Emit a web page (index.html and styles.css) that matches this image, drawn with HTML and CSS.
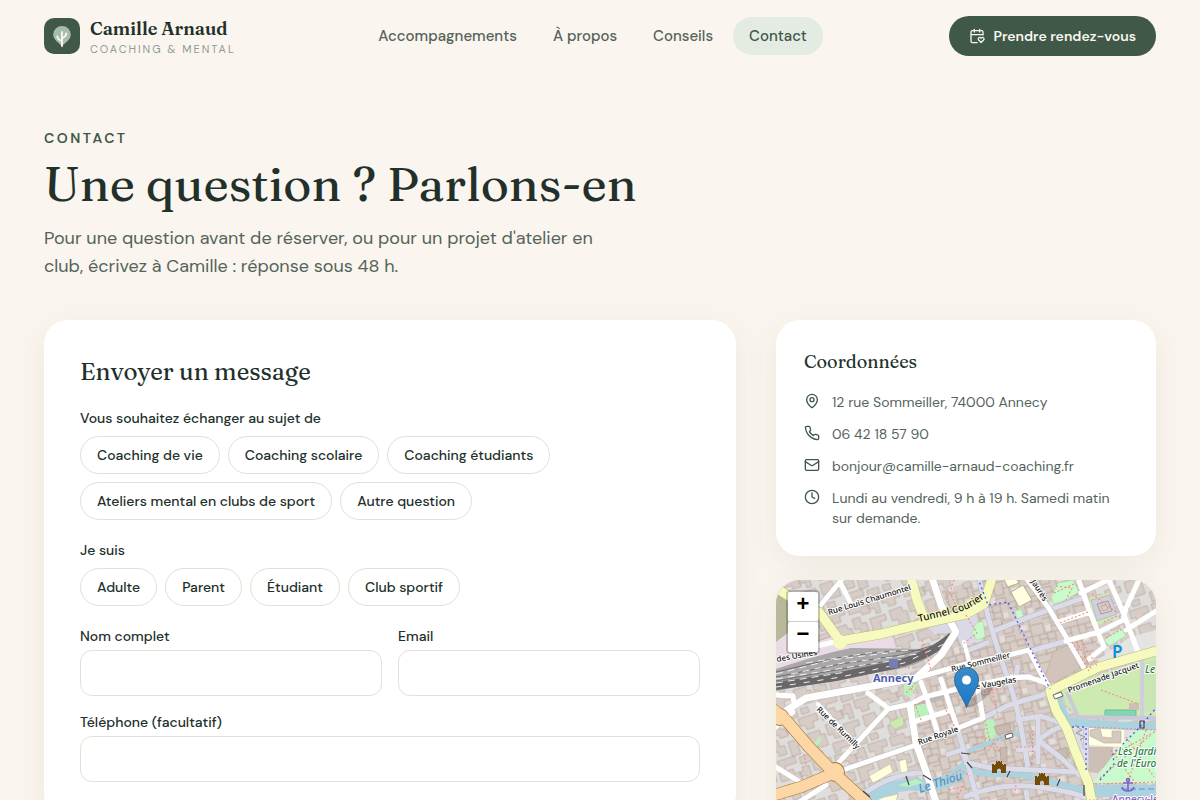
FILE: index.html
```html
<!DOCTYPE html>
<html lang="fr">
<head>
<meta charset="utf-8">
<meta name="viewport" content="width=device-width, initial-scale=1">
<title>Contact – Camille Arnaud</title>
<link rel="stylesheet" href="styles.css">
</head>
<body>
<header class="site-header">
  <a class="brand" href="#">
    <svg class="brand-mark" viewBox="0 0 36 36" aria-hidden="true">
      <rect width="36" height="36" rx="10" fill="#3f5848"/>
      <path d="M18 28C14.500 24.500 9.200 21.500 9.200 16.400A8.800 8.300 0 0 1 26.800 16.400C26.800 21.500 21.500 24.500 18 28Z" fill="#a5bda9"/>
      <path d="M18 28V14M18 23Q13.500 21.500 13.300 18.500M18 20.500Q22 18.500 22.300 15.500" fill="none" stroke="#faf5ee" stroke-width="1.900" stroke-linecap="round"/>
    </svg>
    <span class="brand-text"><span class="brand-name">Camille Arnaud</span><span class="brand-tag">COACHING &amp; MENTAL</span></span>
  </a>
  <nav class="main-nav">
    <a href="#">Accompagnements</a>
    <a href="#">À propos</a>
    <a href="#">Conseils</a>
    <a class="current" href="#" aria-current="page">Contact</a>
  </nav>
  <button class="book" type="button">
    <svg class="icon" viewBox="0 0 24 24" aria-hidden="true"><path d="M8 2v4M16 2v4M3 10h18M12.200 22H5a2 2 0 0 1-2-2V6a2 2 0 0 1 2-2h14a2 2 0 0 1 2 2v4.500"/><path d="M14.600 18a2.250 2.250 0 0 1 0-3.200 2.200 2.200 0 0 1 3.100 0l.5.500.5-.5a2.200 2.200 0 0 1 3.200 0 2.250 2.250 0 0 1 0 3.200L18.200 21.700Z"/></svg>
    Prendre rendez-vous
  </button>
</header>

<main class="page">
  <div class="intro">
    <p class="eyebrow">CONTACT</p>
    <h1>Une question ? Parlons-en</h1>
    <p class="lead">Pour une question avant de réserver, ou pour un projet d'atelier en club, écrivez à Camille : réponse sous 48 h.</p>
  </div>
  <div class="columns">
    <form class="card message">
      <h2>Envoyer un message</h2>
      <fieldset class="group">
        <legend>Vous souhaitez échanger au sujet de</legend>
        <div class="chips">
          <button type="button">Coaching de vie</button>
          <button type="button">Coaching scolaire</button>
          <button type="button">Coaching étudiants</button>
          <button type="button">Ateliers mental en clubs de sport</button>
          <button type="button">Autre question</button>
        </div>
      </fieldset>
      <fieldset class="group">
        <legend>Je suis</legend>
        <div class="chips">
          <button type="button">Adulte</button>
          <button type="button">Parent</button>
          <button type="button">Étudiant</button>
          <button type="button">Club sportif</button>
        </div>
      </fieldset>
      <div class="pair">
        <div class="field"><label for="name">Nom complet</label><input id="name" type="text"></div>
        <div class="field"><label for="email">Email</label><input id="email" type="email"></div>
      </div>
      <div class="field"><label for="phone">Téléphone (facultatif)</label><input id="phone" type="tel"></div>
    </form>

    <aside class="side">
      <section class="card details">
        <h2>Coordonnées</h2>
        <ul>
          <li><svg class="icon" viewBox="0 0 24 24" aria-hidden="true"><path d="M20 10c0 5-5.500 10.200-7.400 11.800a1 1 0 0 1-1.200 0C9.500 20.200 4 15 4 10a8 8 0 0 1 16 0"/><circle cx="12" cy="10" r="3"/></svg><span>12 rue Sommeiller, 74000 Annecy</span></li>
          <li><svg class="icon" viewBox="0 0 24 24" aria-hidden="true"><path d="M22 16.920v3a2 2 0 0 1-2.180 2 19.800 19.800 0 0 1-8.630-3.070 19.500 19.500 0 0 1-6-6A19.800 19.800 0 0 1 2.120 4.180 2 2 0 0 1 4.110 2h3a2 2 0 0 1 2 1.720c.13.960.36 1.900.7 2.810a2 2 0 0 1-.45 2.110L8.090 9.910a16 16 0 0 0 6 6l1.270-1.270a2 2 0 0 1 2.110-.45c.91.340 1.850.57 2.810.7A2 2 0 0 1 22 16.920z"/></svg><span>06 42 18 57 90</span></li>
          <li><svg class="icon" viewBox="0 0 24 24" aria-hidden="true"><rect x="2" y="4" width="20" height="16" rx="2"/><path d="m22 7-9 5.700a2 2 0 0 1-2 0L2 7"/></svg><span>bonjour@camille-arnaud-coaching.fr</span></li>
          <li><svg class="icon" viewBox="0 0 24 24" aria-hidden="true"><circle cx="12" cy="12" r="10"/><path d="M12 6v6l4 2"/></svg><span>Lundi au vendredi, 9 h à 19 h. Samedi matin sur demande.</span></li>
        </ul>
      </section>

      <section class="map" aria-label="Plan d'accès">
        <svg class="tiles" viewBox="0 0 380 280" preserveAspectRatio="xMidYMin slice" aria-hidden="true">
          <defs>
            <pattern id="blocks" width="58" height="46" patternUnits="userSpaceOnUse" patternTransform="rotate(-18)">
              <rect width="58" height="46" fill="#dfdedd"/>
              <path d="M1 1h15v5h6v8h-9v-4H1zM25 2h7v15h-5v-6h-6V6h4zM36 1h19v7h-6v6h-8V9h-5zM2 15h8v7h5v9H7v-5H2zM19 20h16v6h-7v9h-9zM40 18h13v5h4v12H46v-6h-6zM3 35h18v7H9v3H3zM25 38h12v7H25zM41 38h8v6h-8z" fill="#d7cdc6" stroke="#b5a69c" stroke-width=".7"/>
            </pattern>
            <pattern id="dense" width="47" height="39" patternUnits="userSpaceOnUse" patternTransform="rotate(-14)">
              <rect width="47" height="39" fill="#d8cdc6"/>
              <path d="M0 0h47v39H0zM7 0v9H0M7 5h8v8h-5v9M15 0v7h8v-7M23 7v10h9M31 0v6h8v9h8M39 6V0M10 13h11v7H10M21 17v13h9V19M0 20h10M0 28h13v11M13 24h8M30 24h12v-9M36 24v9h11M20 39v-6h10v6" fill="none" stroke="#b1a196" stroke-width=".8"/>
              <path d="M24 9h5v5h-5zM2 11h5v6H2zM38 26h6v5h-6zM15 31h5v6h-5z" fill="#e2dfdc"/>
            </pattern>
            <linearGradient id="pin" x1="0" y1="0" x2="0" y2="1"><stop offset="0" stop-color="#3a8bc8"/><stop offset="1" stop-color="#1b78c8"/></linearGradient>
            <path id="tunnel" d="M143 42 180 33Q198 28 213 14L225 2"/>
          </defs>
          <rect width="380" height="280" fill="url(#blocks)"/>
          <path d="M165 10 203 0H300L310 17 325 50 310 90 273 108 315 220V280H160L140 160 134 125 165 80 181 52Z" fill="url(#dense)"/>
          <!-- green and open areas -->
          <path d="M0 12 14 22V52L0 64Z" fill="#b8b99b"/>
          <path d="M0 62 42 30 58 61 115 52 120 71 70 72 0 95Z" fill="#ebdbe6"/>
          <path d="M18 51 43 36 54 57 22 67Z" fill="url(#blocks)" stroke="#bfaebb"/>
          <path d="M152 48 181 40 200 32 204 60 186 68 180 52 158 54Z" fill="#d9d9e7"/>
          <path d="M313 18 333 13 342 37 320 46Z" fill="#cdebb0"/>
          <path d="M315 20 334 15 341 34 321 41Z" fill="#cfcfdf" stroke="#aaaabd" stroke-width=".6"/>
          <path d="M321 24 332 21 336 31 325 34Z" fill="#d8cbc2" stroke="#ad9c90"/>
          <path d="M325 26 330 25 332 29 327 31Z" fill="#cfcfdf" stroke="#ad9c90" stroke-width=".6"/>
          <path d="M275 17 282 3 297 0 303 12 290 20 278 24ZM196 53 200 43 207 41 209 57 201 60ZM239 31 245 29 248 37 241 39ZM328 60 345 48 350 56 333 66Z" fill="#c8facc" stroke="#a7d6a6" stroke-width=".5"/>
          <path d="M235 12 247 5 256 20 243 27ZM228 0 240-2 243 3 232 7Z" fill="#ffffdf" stroke="#baad9f"/>
          <path d="M277 72 294 64 304 88 280 102 268 101Z" fill="#d2c4bb" stroke="#b9a99e" stroke-width=".6"/>
          <path d="M322 80 354 57 380 50V71L321 88Z" fill="#e5e4e2"/>
          <path d="M285 107 380 76V137H303L290 125Z" fill="#cdebb0"/>
          <path d="M366 83 380 79V132H366Z" fill="#c9e5b4"/>
          <path d="M329 130h31v6h-31z" fill="#82d7b3" stroke="#65bd98"/>
          <path d="M353 123h10v7h-10z" fill="#cfbeb4"/>
          <path d="M296 147H380V153L350 180 324 202 316 202Z" fill="#e1dfdf"/>
          <path d="M311 148H348V167L313 165Z" fill="#ffffe2"/>
          <path d="M314 150 324 148 326 157 336 158V151H345V163H328L314 156Z" fill="#d5c9c0" stroke="#b9a99e" stroke-width=".6"/>
          <path d="M310 167H337V178L322 193 310 192Z" fill="#cdbfb6"/>
          <path d="M317 203 337 175 360 148 380 149V203Z" fill="#c8facc"/>
          <path d="M93 196 114 184 117 192 97 203ZM123 181 130 179 132 192 125 194ZM100 219 122 214 119 226H98Z" fill="#ffffdf" stroke="#c9b99c" stroke-width=".6"/>
          <path d="M113 143 127 136 128 145 119 149Z" fill="#cdebb0" stroke="#aac98d" stroke-width=".6"/>
          <path d="M36 165 45 156 45 161 39 168ZM102 132 109 130 106 135ZM208 140 218 139 220 155 211 166ZM135 124Q144 119 152 126L152 138 138 141ZM128 98 142 103 134 118 128 114Z" fill="#b9f2bd"/>
          <path d="M218 147 234 143 235 151 222 155ZM224 168 231 167 231 182 225 182ZM278 172 290 167 292 176 284 181Z" fill="#c9b9af" stroke="#ad9c90" stroke-width=".6"/>
          <!-- water -->
          <g fill="none" stroke="#aad3df" stroke-linejoin="round">
            <path d="M278 112 291 141Q330 147 380 146" stroke-width="8"/>
            <path d="M87 222Q118 202 145 205T195 181" stroke-width="12"/>
            <path d="M188 188Q205 195 225 194T270 200 310 211" stroke-width="6"/>
            <path d="M192 171 228 157 245 153" stroke-width="4"/>
            <path d="M309 211H380" stroke-width="12"/>
          </g>
          <path d="M122 205 140 199 148 203 131 207Z" fill="#b9efc4"/>
          <!-- railway -->
          <path d="M0 89Q45 74 75 68L152 69 178 53Q160 81 123 89L60 99 0 111Z" fill="#a9a7a7"/>
          <g fill="none" stroke="#696767" stroke-width="8"><path d="M0 106 60 97 122 84Q156 74 176 56"/></g>
          <g fill="none" stroke="#6f6e6e" stroke-width="1"><path d="M0 92 60 78 104 72 150 70M0 97 65 84 125 75 165 63M0 101 60 90 130 78"/></g>
          <g fill="none" stroke="#f1eff0" stroke-width="1" stroke-dasharray="7 5"><path d="M0 94 55 80 112 73M15 94 67 83 142 74M0 99 61 89 128 79M30 83 92 73 135 70M0 103 70 92"/></g>
          <path d="M0 107 65 97 128 83 168 64" fill="none" stroke="#f1eff0" stroke-width="1" stroke-dasharray="6 8"/>
          <!-- pedestrian streets -->
          <use href="#ped" fill="none" stroke="#b5b4c4" stroke-width="6"/>
          <path id="ped" stroke-linejoin="round" fill="none" d="M203-2 213 40 223 73 235 108M188 72 213 62M215 52 253 37 310 17M255 71 293 60M235 108 240 124 245 147 252 187M207 138 233 125 273 113M240 140 265 136 290 145M188 182 215 188 257 190 300 192 310 200M262 137 262 184M262 160 277 150 290 145M262 160 285 178 298 190M188 217Q225 202 262 207T310 218M182 150 192 185 202 222M170 175 185 170 192 184M90 212Q120 192 148 193M240 170 262 168M195 225V280M250 210 260 280M300 150 310 190V147M242 85 240 97 254 96"/>
          <use href="#ped" fill="none" stroke="#dcdce8" stroke-width="5"/>
          <path d="M366 76V142" stroke="#cfcedd" stroke-width="4"/>
          <path d="M291 112 302 137 380 138" fill="none" stroke="#c9c9d7" stroke-width="4"/>
          <!-- streets -->
          <g fill="none" stroke="#bdb7b4" stroke-linejoin="round" stroke-linecap="round"><path stroke-width="6" d="M43 27 67-2M250-2 272 27 293 62 308 88M140 98 190 84 233 75 253 70 263 90 273 107M63 182 112 129 135 124 180 111M67 190 140 165 200 142"/><path stroke-width="8" d="M156-2 165 25 180 52 165 75 140 98 80 109 30 118 8 132M134 125 140 163 152 197 160 222 175 282"/></g>
          <g fill="none" stroke="#fff" stroke-linejoin="round" stroke-linecap="round">
            <path stroke-width="5" d="M43 27 67-2M65 4 75 24M250-2 272 27 293 62 308 88M302-2 313 30 328 67 313 79M332-2 347 32 362 72M290 61 323 52 347 40 350 28 363 0M350 50 380 31M305 13 336-2M283 42 314 32M140 98 190 84 233 75 253 70 263 90 273 107M152 116 190 107 235 98 253 97 270 103M0 115 17 116 18 122M0 147 17 132M92 113 112 128M63 182 112 129 135 124 150 116M67 190 140 165 207 138M137 142 173 131M165 99 182 150M0 187 27 204M0 237 50 205M207 138 202 110M24 70 58 62M145 102 152 122 162 154M30 280 70 230 90 225M315 280 345 240 380 230"/>
            <path stroke-width="4" d="M42 124 63 147 81 165M188 62 194 85"/>
            <path stroke-width="7" d="M156-2 165 25 180 52 165 75 140 98 80 109 30 118 8 132M134 125 140 163 152 197 160 222 175 282"/>
          </g>
          <!-- main roads -->
          <g fill="none" stroke-linejoin="round" stroke-linecap="round">
            <path stroke="#b8bc74" stroke-width="10" d="M0 8 22 22 43 32 64 61 105 54 150 43 190 34 208 24 216-2M150 43 141 20 135-2M380 71 323 87 274 111 280 130 291 149 300 173 312 202 316 222 318 282"/>
            <path stroke="#f7fabf" stroke-width="9" d="M0 8 22 22 43 32 64 61 105 54 150 43 190 34 208 24 216-2M150 43 141 20 135-2M380 71 323 87 274 111 280 130 291 149 300 173 312 202 316 222 318 282"/>
            <circle cx="64" cy="62" r="7" fill="#f7fabf"/>
            <path d="M-2 130 10 140 33 167 58 193 90 222 115 282M58 193 25 207-2 215" stroke="#a87832" stroke-width="12"/>
            <circle cx="4" cy="137" r="9" fill="#a87832"/><circle cx="59" cy="192" r="10" fill="#a87832"/>
            <path d="M-2 130 10 140 33 167 58 193 90 222 115 282M58 193 25 207-2 215" stroke="#fcd6a4" stroke-width="11"/>
            <circle cx="4" cy="137" r="8" fill="#fcd6a4"/><circle cx="59" cy="192" r="9" fill="#fcd6a4"/>
          </g>
          <!-- footpaths and cycle routes -->
          <g fill="none" stroke="#f58a82" stroke-width="1.100" stroke-dasharray="2 2"><path d="M178 0 174 12 180 26 172 34M190 35 201 53 188 63M280 6 296 8 290 20M278 13 300 3M284 43 312 32M301 62 316 90M305 60 321 86M296 62 313 91M328 42 341 36M330 58 348 48M316 14 340 32M146 60 152 79 155 91M124 87 137 88M130 102 140 115M140 103 130 113M138 125 150 121M140 127 145 140M208 112 225 108M215 108 223 140M209 140 214 162M201 157 219 160 238 153M212 171 218 162 225 174M240 167 260 167M257 150 256 185M314 147 380 150M335 176 380 151M324 198 376 154M335 170 360 204M350 157 378 197M319 204 380 202M370 150 352 201M325 110 363 124M173 197 184 190 194 196M173 210 188 206 179 219M28 174 30 185M170 130 182 153M240 205 238 215M313 220H380"/></g>
          <g fill="none" stroke="#4a54ff" stroke-width="1.300" stroke-dasharray="2 3"><path d="M202-2 212 25 232 22 255 70 274 109M296 147H310V191M324 200 338 184 337 174 364 147 380 128"/></g>
          <path d="M345 209H380" fill="none" stroke="#7186e8" stroke-width="1" stroke-dasharray="6 3"/>
          <g fill="none" stroke="#454348" stroke-width="1.200"><path d="M87 211 94 217M147 195 155 200M185 173 194 174M191 182 196 188M234 191 231 197M284 199 281 206M308 205V216M130 196 133 205M364 141H368V148H364Z"/></g>
          <g fill="#fff" stroke="#454348" stroke-width=".8"><path d="M229 155 236 153 237 157 230 159ZM277 115 285 112 287 116 279 119Z"/></g>
          <!-- places -->
          <rect x="113" y="79" width="9" height="9" fill="#747eb3"/>
          <path d="M299 145 306 150 300 153 309 157 304 160" stroke="#9996a6" fill="none"/>
          <g fill="#734a08"><path id="castle" d="M216 184h2v1h1v-1h1v-3h1v1h1v-1h2v1h1v-1h1v3h1v1h1v-1h2v9h-5v-3q-2-3-4 0v3h-5z"/><use href="#castle" x="43" y="12"/></g>
          <g fill="none" stroke="#8461c4" stroke-width="1.600"><path d="M352 201V211M347 203H357M346 207Q347 211 352 211T358 207"/><circle cx="352" cy="200" r="1.500"/></g>
          <g class="map-labels">
            <text transform="translate(53 35) rotate(-17)">Rue Louis Chaumontel</text>
            <text class="road-big"><textPath href="#tunnel">Tunnel Courier</textPath></text>
            <text transform="translate(1 82) rotate(-10)">des Usines</text>
            <text transform="translate(176 92) rotate(-14)">Rue Sommeiller</text>
            <text transform="translate(190 111) rotate(-10)">Rue Vaugelas</text>
            <text transform="translate(245-14) rotate(58)">Jean Jaurès</text>
            <text transform="translate(40 130) rotate(44)">Rue de Rumilly</text>
            <text transform="translate(143 165) rotate(-19)">Rue Royale</text>
            <text transform="translate(293 113) rotate(-20)">Promenade Jacquet</text>
            <text class="station" x="97" y="102">Annecy</text>
            <text class="parking" x="336" y="78">P</text>
            <text class="garden" x="369" y="93">Le Pâquier</text>
            <text class="garden" x="342" y="175">Les Jardins</text>
            <text class="garden" x="341" y="187">de l'Europe</text>
            <text class="river" transform="translate(144 213) rotate(-18)">Le Thiou</text>
            <text class="port" x="336" y="223">Annecy-le-Vieux</text>
          </g>
          <ellipse cx="204" cy="117" rx="16" ry="4" transform="rotate(-38 204 117)" fill="#000" opacity=".18"/>
          <path d="M190.500 127.500C187 117 178.500 108 178.500 99.500A12 12 0 0 1 202.500 99.500C202.500 108 194 117 190.500 127.500Z" fill="url(#pin)" stroke="#2e6c97"/>
          <circle cx="190.500" cy="100" r="4.500" fill="#fff"/>
        </svg>
        <div class="zoom"><button type="button" aria-label="Zoom avant">+</button><button type="button" aria-label="Zoom arrière">−</button></div>
      </section>
    </aside>
  </div>
</main>
</body>
</html>
```
FILE: styles.css
```css
*{box-sizing:border-box}
body{margin:0;background:#faf5ee;color:#22302b;font-family:"DM Sans",Inter,"Liberation Sans",sans-serif;font-size:14px;line-height:20px}
a{color:inherit;text-decoration:none}
button,input{font:inherit;color:inherit}
button{cursor:pointer}
h1,h2,p,ul{margin:0;padding:0}
.site-header{display:flex;align-items:center;justify-content:space-between;min-height:72px;padding:0 44px}
.brand{display:flex;align-items:center;gap:10px}
.brand-mark{width:36px;height:36px}
.brand-text{display:flex;flex-direction:column;padding-top:2px}
.brand-name{font-family:Fraunces,"Liberation Serif",serif;font-size:18px;font-weight:600;line-height:24px}
.brand-tag{font-size:11px;line-height:16px;letter-spacing:.18em;color:#8f9b94}
.main-nav{display:flex;gap:4px}
.main-nav a{padding:9px 16px;border-radius:20px;color:#55635c;font-size:15px;font-weight:500}
.main-nav .current{background:#e3ebe2;color:#3f5848}
.book{display:flex;align-items:center;gap:8px;padding:10px 20px;border:0;border-radius:20px;background:#3f5848;color:#faf5ee;font-size:14px;font-weight:600}
.icon{width:16px;height:16px;flex:none;fill:none;stroke:currentColor;stroke-width:2;stroke-linecap:round;stroke-linejoin:round}
.page{padding:56px 44px 72px}
.eyebrow{color:#3f5848;font-size:14px;font-weight:600;letter-spacing:.18em}
h1,h2{font-family:Fraunces,"Liberation Serif",serif;font-weight:400}
h1{margin-top:8px;font-size:48px;line-height:56px}
.lead{max-width:576px;margin-top:12px;color:#55635c;font-size:18px;line-height:28px}
.columns{display:grid;grid-template-columns:minmax(0,1fr) 380px;gap:40px;align-items:start;margin-top:40px}
.card{background:#fff;border-radius:24px;box-shadow:0 8px 32px rgba(80,75,45,.08)}
.message{padding:36px}
.message h2{font-size:24px;line-height:32px;margin-bottom:20px}
.group{min-width:0;margin:0 0 20px;padding:0;border:0}
.group legend,.field label{display:block;padding:0;font-weight:500;line-height:20px}
.group legend{margin-bottom:8px}
.chips{display:flex;flex-wrap:wrap;gap:8px}
.chips button{padding:8px 16px;border:1px solid #e6dfd2;border-radius:20px;background:#fff;font-weight:500}
.pair{display:grid;grid-template-columns:1fr 1fr;gap:16px;margin-bottom:16px}
.field input{display:block;width:100%;height:46px;margin-top:4px;padding:0 14px;border:1px solid #e6dfd2;border-radius:12px;background:#fff}
.side{display:grid;gap:24px}
.details{padding:28px}
.details h2{font-size:18px;line-height:28px}
.details ul{display:grid;gap:12px;margin-top:16px;list-style:none}
.details li{display:flex;gap:12px;color:#55635c}
.details .icon{margin-top:1px;color:#3f5848}
.map{position:relative;height:280px;overflow:hidden;border-radius:24px;box-shadow:0 8px 32px rgba(80,75,45,.08)}
.tiles{display:block;width:100%;height:100%}
.map-labels{font-family:"Noto Sans",sans-serif;font-size:8px;font-weight:500;fill:#111;stroke:#fff;stroke-width:2px;stroke-linejoin:round;paint-order:stroke}
.map-labels .road-big{font-size:10px;stroke:#f7fabf}
.map-labels .station{font-size:11px;font-weight:700;fill:#4a5eaa}
.map-labels .parking{font-size:17px;font-weight:600;fill:#0092da;stroke:none}
.map-labels .garden{font-size:10px;font-style:italic;fill:#267d3d}
.map-labels .river{font-size:12px;font-style:italic;fill:#5c8fb8;stroke:#aad3df;stroke-width:1px}
.map-labels .port{font-size:10px;fill:#8461c4}
.zoom{position:absolute;top:10px;left:10px;display:grid;border:2px solid rgba(0,0,0,.2);border-radius:4px;background-clip:padding-box}
.zoom button{width:30px;height:30px;padding:0 0 6px;border:0;border-radius:2px;background:#fff;color:#000;font:bold 22px/24px "Liberation Sans",sans-serif}
.zoom button:first-child{border-bottom:1px solid #ccc}
@media(max-width:900px){.site-header{flex-wrap:wrap;gap:12px;padding:12px 20px}.page{padding:32px 20px}.columns{grid-template-columns:1fr}}
```
